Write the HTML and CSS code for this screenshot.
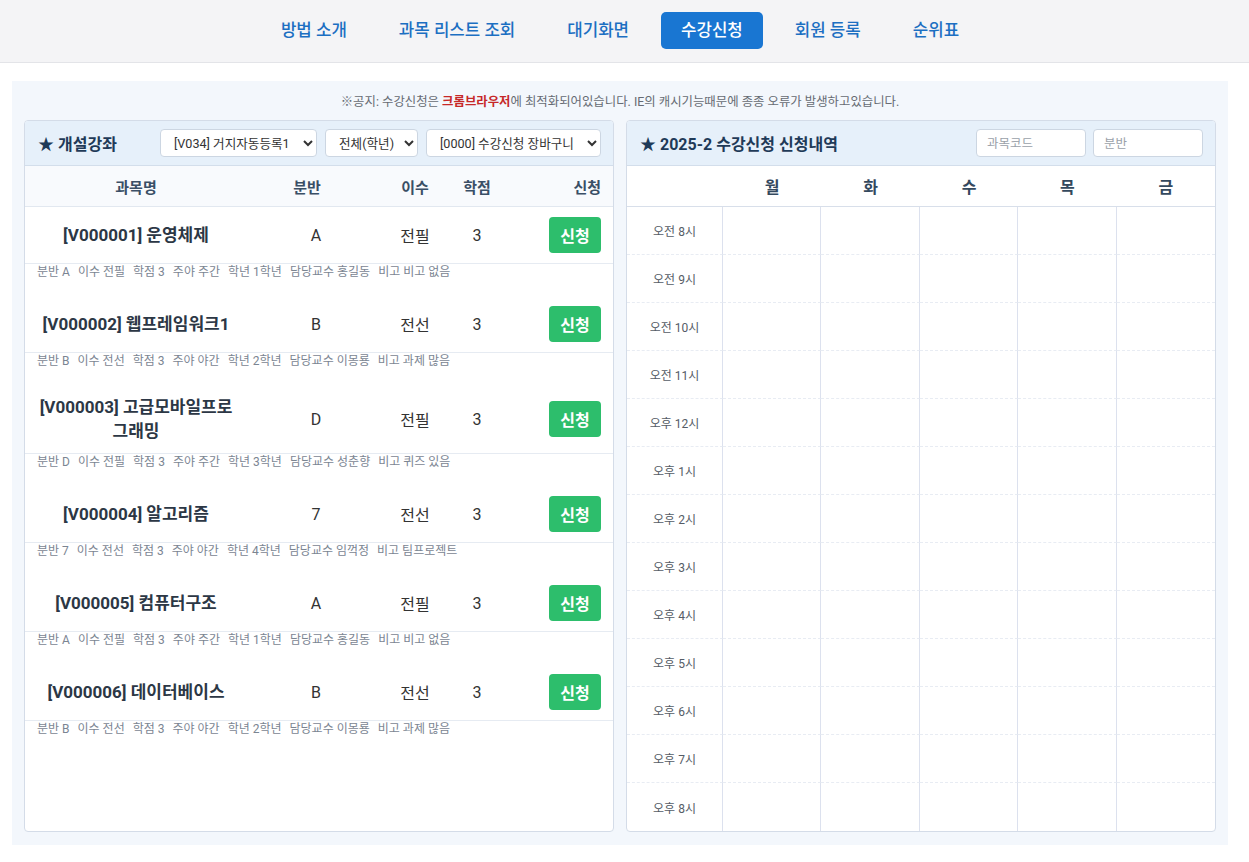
FILE: index.html
```html
<!DOCTYPE html>
<html lang="ko">
<head>
<meta charset="utf-8">
<title>수강신청</title>
<link rel="stylesheet" href="styles.css">
</head>
<body>
<nav class="topnav">
  <a class="nav-item">방법 소개</a>
  <a class="nav-item">과목 리스트 조회</a>
  <a class="nav-item">대기화면</a>
  <a class="nav-item active">수강신청</a>
  <a class="nav-item">회원 등록</a>
  <a class="nav-item">순위표</a>
</nav>

<main class="container">
  <p class="notice">※공지: 수강신청은 <b class="red">크롬브라우저</b>에 최적화되어있습니다. IE의 캐시기능때문에 종종 오류가 발생하고있습니다.</p>
  <div class="panels">
    <section class="panel">
      <div class="panel-head">
        <h2 class="panel-title">★ 개설강좌</h2>
        <div class="selects">
          <select class="sel sel-a"><option>[V034] 거지자동등록1</option></select>
          <select class="sel sel-b"><option>전체(학년)</option></select>
          <select class="sel sel-c"><option>[0000] 수강신청 장바구니</option></select>
        </div>
      </div>
      <div class="course-list">
        <div class="crow chead">
          <div class="c-name">과목명</div>
          <div class="c-sec">분반</div>
          <div class="c-type">이수</div>
          <div class="c-cred">학점</div>
          <div class="c-act">신청</div>
        </div>

        <div class="crow cmain">
          <div class="c-name">[V000001] 운영체제</div>
          <div class="c-sec">A</div>
          <div class="c-type">전필</div>
          <div class="c-cred">3</div>
          <div class="c-act"><button class="apply">신청</button></div>
        </div>
        <div class="cdetail"><span>분반 A</span><span>이수 전필</span><span>학점 3</span><span>주야 주간</span><span>학년 1학년</span><span>담당교수 홍길동</span><span>비고 비고 없음</span></div>

        <div class="crow cmain">
          <div class="c-name">[V000002] 웹프레임워크1</div>
          <div class="c-sec">B</div>
          <div class="c-type">전선</div>
          <div class="c-cred">3</div>
          <div class="c-act"><button class="apply">신청</button></div>
        </div>
        <div class="cdetail"><span>분반 B</span><span>이수 전선</span><span>학점 3</span><span>주야 야간</span><span>학년 2학년</span><span>담당교수 이몽룡</span><span>비고 과제 많음</span></div>

        <div class="crow cmain">
          <div class="c-name">[V000003] 고급모바일프로그래밍</div>
          <div class="c-sec">D</div>
          <div class="c-type">전필</div>
          <div class="c-cred">3</div>
          <div class="c-act"><button class="apply">신청</button></div>
        </div>
        <div class="cdetail"><span>분반 D</span><span>이수 전필</span><span>학점 3</span><span>주야 주간</span><span>학년 3학년</span><span>담당교수 성춘향</span><span>비고 퀴즈 있음</span></div>

        <div class="crow cmain">
          <div class="c-name">[V000004] 알고리즘</div>
          <div class="c-sec">7</div>
          <div class="c-type">전선</div>
          <div class="c-cred">3</div>
          <div class="c-act"><button class="apply">신청</button></div>
        </div>
        <div class="cdetail"><span>분반 7</span><span>이수 전선</span><span>학점 3</span><span>주야 야간</span><span>학년 4학년</span><span>담당교수 임꺽정</span><span>비고 팀프로젝트</span></div>

        <div class="crow cmain">
          <div class="c-name">[V000005] 컴퓨터구조</div>
          <div class="c-sec">A</div>
          <div class="c-type">전필</div>
          <div class="c-cred">3</div>
          <div class="c-act"><button class="apply">신청</button></div>
        </div>
        <div class="cdetail"><span>분반 A</span><span>이수 전필</span><span>학점 3</span><span>주야 주간</span><span>학년 1학년</span><span>담당교수 홍길동</span><span>비고 비고 없음</span></div>

        <div class="crow cmain">
          <div class="c-name">[V000006] 데이터베이스</div>
          <div class="c-sec">B</div>
          <div class="c-type">전선</div>
          <div class="c-cred">3</div>
          <div class="c-act"><button class="apply">신청</button></div>
        </div>
        <div class="cdetail"><span>분반 B</span><span>이수 전선</span><span>학점 3</span><span>주야 야간</span><span>학년 2학년</span><span>담당교수 이몽룡</span><span>비고 과제 많음</span></div>
      </div>
    </section>

    <section class="panel">
      <div class="panel-head">
        <h2 class="panel-title">★ 2025-2 수강신청 신청내역</h2>
        <div class="inputs">
          <input class="field" type="text" placeholder="과목코드">
          <input class="field" type="text" placeholder="분반">
        </div>
      </div>
      <div class="timetable">
        <div class="tt-h"></div><div class="tt-h">월</div><div class="tt-h">화</div><div class="tt-h">수</div><div class="tt-h">목</div><div class="tt-h">금</div>

        <div class="tt-time">오전 8시</div><div class="tt-cell"></div><div class="tt-cell"></div><div class="tt-cell"></div><div class="tt-cell"></div><div class="tt-cell"></div>
        <div class="tt-time">오전 9시</div><div class="tt-cell"></div><div class="tt-cell"></div><div class="tt-cell"></div><div class="tt-cell"></div><div class="tt-cell"></div>
        <div class="tt-time">오전 10시</div><div class="tt-cell"></div><div class="tt-cell"></div><div class="tt-cell"></div><div class="tt-cell"></div><div class="tt-cell"></div>
        <div class="tt-time">오전 11시</div><div class="tt-cell"></div><div class="tt-cell"></div><div class="tt-cell"></div><div class="tt-cell"></div><div class="tt-cell"></div>
        <div class="tt-time">오후 12시</div><div class="tt-cell"></div><div class="tt-cell"></div><div class="tt-cell"></div><div class="tt-cell"></div><div class="tt-cell"></div>
        <div class="tt-time">오후 1시</div><div class="tt-cell"></div><div class="tt-cell"></div><div class="tt-cell"></div><div class="tt-cell"></div><div class="tt-cell"></div>
        <div class="tt-time">오후 2시</div><div class="tt-cell"></div><div class="tt-cell"></div><div class="tt-cell"></div><div class="tt-cell"></div><div class="tt-cell"></div>
        <div class="tt-time">오후 3시</div><div class="tt-cell"></div><div class="tt-cell"></div><div class="tt-cell"></div><div class="tt-cell"></div><div class="tt-cell"></div>
        <div class="tt-time">오후 4시</div><div class="tt-cell"></div><div class="tt-cell"></div><div class="tt-cell"></div><div class="tt-cell"></div><div class="tt-cell"></div>
        <div class="tt-time">오후 5시</div><div class="tt-cell"></div><div class="tt-cell"></div><div class="tt-cell"></div><div class="tt-cell"></div><div class="tt-cell"></div>
        <div class="tt-time">오후 6시</div><div class="tt-cell"></div><div class="tt-cell"></div><div class="tt-cell"></div><div class="tt-cell"></div><div class="tt-cell"></div>
        <div class="tt-time">오후 7시</div><div class="tt-cell"></div><div class="tt-cell"></div><div class="tt-cell"></div><div class="tt-cell"></div><div class="tt-cell"></div>
        <div class="tt-time last">오후 8시</div><div class="tt-cell last"></div><div class="tt-cell last"></div><div class="tt-cell last"></div><div class="tt-cell last"></div><div class="tt-cell last"></div>
      </div>
    </section>
  </div>
</main>
</body>
</html>
```

FILE: styles.css
```css
* { box-sizing: border-box; }

html, body {
  margin: 0;
  padding: 0;
  background: #ffffff;
  font-family: "Roboto", "Noto Sans CJK KR", "Noto Sans", sans-serif;
  color: #333;
}

.topnav {
  height: 63px;
  background: #f4f4f6;
  border-bottom: 1px solid #e3e4e8;
  display: flex;
  justify-content: center;
  align-items: flex-start;
  gap: 12px;
  padding-top: 12px;
  padding-right: 9px;
}

.nav-item {
  display: block;
  height: 37px;
  line-height: 37px;
  padding: 0 20px;
  font-size: 16.8px;
  font-weight: 500;
  color: #1c6fc2;
  border-radius: 5px;
  cursor: pointer;
}

.nav-item.active {
  background: #1976d2;
  color: #ffffff;
}

.container {
  width: 1216px;
  margin: 18px 0 0 12px;
  background: #f3f7fc;
  padding: 12px 12px 13px 12px;
}

.notice {
  margin: 0 0 9px 0;
  text-align: center;
  font-size: 12.4px;
  line-height: 18px;
  color: #666b73;
}

.notice .red { color: #c62828; font-weight: 700; }

.panels {
  display: grid;
  grid-template-columns: 590px 590px;
  gap: 12px;
}

.panel {
  background: #ffffff;
  border: 1px solid #d4dce8;
  border-radius: 4px;
  height: 712px;
  display: flex;
  flex-direction: column;
  overflow: hidden;
}

.panel-head {
  height: 45px;
  flex: none;
  background: #e6f0fa;
  border-bottom: 1px solid #d3deeb;
  display: flex;
  align-items: center;
  justify-content: space-between;
  padding: 0 12px 0 13px;
}

.panel-title {
  margin: 0;
  font-size: 16px;
  font-weight: 700;
  color: #1f3a58;
  white-space: nowrap;
}

.selects {
  display: flex;
  gap: 8px;
}

.sel {
  height: 28px;
  background: #fff;
  border: 1px solid #ccd6e2;
  border-radius: 4px;
  padding: 0 2px 0 9px;
  font-family: "Roboto", "Noto Sans CJK KR", sans-serif;
  font-size: 12.6px;
  color: #333;
  outline: none;
}

.sel-a { width: 157px; }
.sel-b { width: 93px; }
.sel-c { width: 175px; }

.inputs { display: flex; gap: 7px; }

.field {
  width: 110px;
  height: 28px;
  border: 1px solid #ccd6e2;
  border-radius: 4px;
  background: #fff;
  padding: 0 10px;
  font-family: "Roboto", "Noto Sans CJK KR", sans-serif;
  font-size: 12.5px;
  color: #333;
  outline: none;
}

.field::placeholder { color: #9aa1a9; }

.course-list { flex: 1; }

.crow {
  display: grid;
  grid-template-columns: 222px 130px 76px 48px 1fr;
  align-items: center;
}

.chead {
  height: 41px;
  background: #f8fafd;
  border-bottom: 1px solid #e2e8f0;
  font-size: 15px;
  font-weight: 700;
  color: #3a4f66;
}

.crow > div { text-align: center; }

.chead .c-sec { padding-right: 10px; }
.crow .c-act { text-align: right; padding-right: 12px; }

.cmain {
  padding: 10px 0;
  border-bottom: 1px solid #e6ebf2;
  font-size: 16px;
  color: #333;
}

.cmain .c-name {
  padding: 0 12px;
  font-size: 17px;
  font-weight: 700;
  color: #2c3745;
  line-height: 24px;
}

.cmain .c-sec { padding-left: 8px; }

.apply {
  width: 52px;
  height: 36px;
  border: none;
  border-radius: 4px;
  background: #2dbe6c;
  color: #fff;
  font-family: inherit;
  font-size: 16px;
  font-weight: 700;
  cursor: pointer;
  vertical-align: middle;
}

.cdetail {
  height: 32px;
  padding: 0 12px;
  display: flex;
  gap: 8px;
  font-size: 12px;
  line-height: 17px;
  color: #7b8592;
  white-space: nowrap;
}

.timetable {
  flex: 1;
  display: grid;
  grid-template-columns: 96px repeat(5, 1fr);
  grid-template-rows: 41px repeat(13, 48px);
}

.tt-h {
  border-bottom: 1px solid #d8dfea;
  display: flex;
  align-items: center;
  justify-content: center;
  font-size: 16px;
  font-weight: 700;
  color: #34495e;
}

.tt-time {
  display: flex;
  align-items: center;
  justify-content: center;
  font-size: 12px;
  color: #555c66;
  border-right: 1px solid #dce1ee;
  border-bottom: 1px dashed #e8ecf3;
}

.tt-cell {
  border-right: 1px solid #dce1ee;
  border-bottom: 1px dashed #e8ecf3;
}

.tt-cell:nth-child(6n) { border-right: none; }

.tt-time.last, .tt-cell.last { border-bottom: none; }
```
